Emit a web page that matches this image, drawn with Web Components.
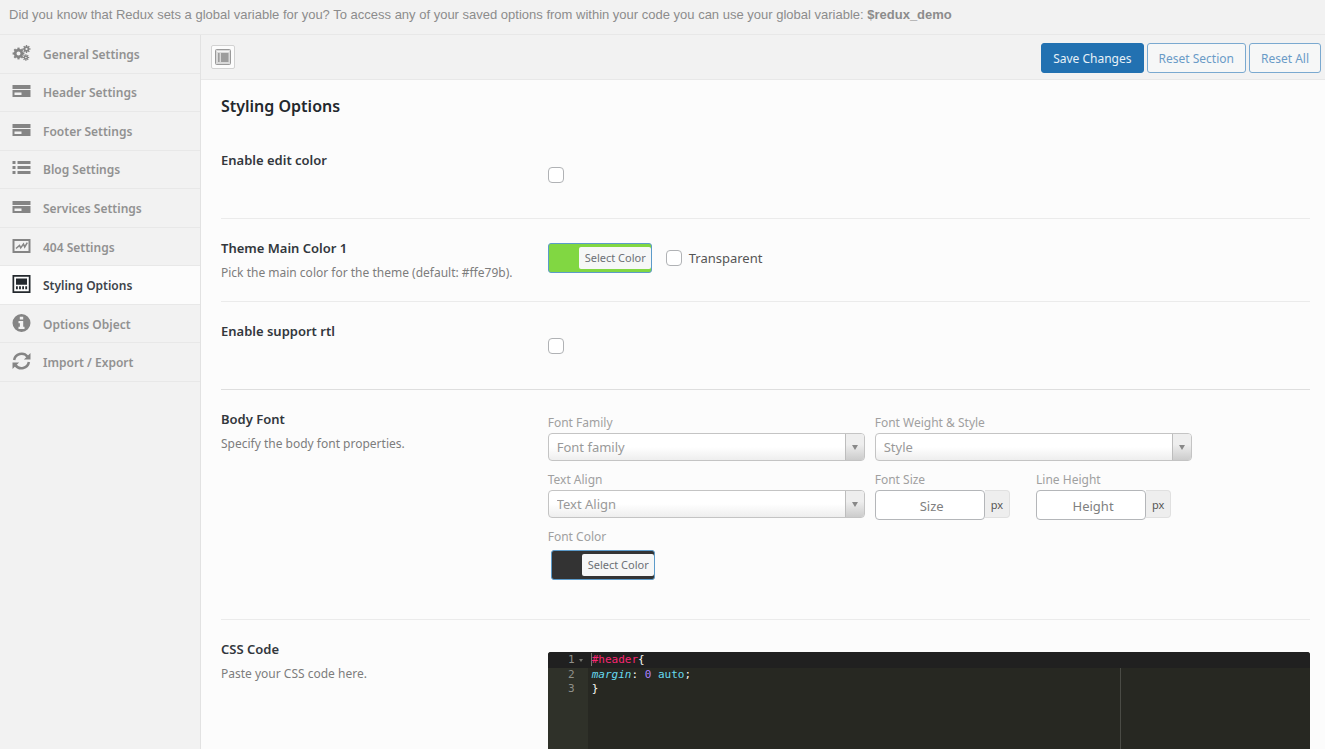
<!DOCTYPE html>
<html lang="en">
<head>
<meta charset="utf-8">
<meta name="viewport" content="width=device-width, initial-scale=1">
<title>Styling Options</title>
<style>
  body { margin: 0; font: 13px/20px "Noto Sans", "Open Sans", sans-serif; color: #3c434a; background: #fcfcfc; }
</style>
</head>
<body>
<redux-panel>
  <redux-hint slot="hint">Did you know that Redux sets a global variable for you? To access any of your saved options from within your code you can use your global variable: <strong>$redux_demo</strong></redux-hint>

  <redux-menu slot="menu">
    <redux-menu-item icon="cogs">General Settings</redux-menu-item>
    <redux-menu-item icon="card">Header Settings</redux-menu-item>
    <redux-menu-item icon="card">Footer Settings</redux-menu-item>
    <redux-menu-item icon="list">Blog Settings</redux-menu-item>
    <redux-menu-item icon="card">Services Settings</redux-menu-item>
    <redux-menu-item icon="chart">404 Settings</redux-menu-item>
    <redux-menu-item icon="site" active>Styling Options</redux-menu-item>
    <redux-menu-item icon="info">Options Object</redux-menu-item>
    <redux-menu-item icon="refresh">Import / Export</redux-menu-item>
  </redux-menu>

  <redux-toolbar slot="toolbar">
    <redux-button primary>Save Changes</redux-button>
    <redux-button>Reset Section</redux-button>
    <redux-button>Reset All</redux-button>
  </redux-toolbar>

  <redux-section heading="Styling Options">
    <redux-field heading="Enable edit color"><redux-check label="Enable edit color" solo></redux-check></redux-field>
    <redux-field heading="Theme Main Color 1" hint="Pick the main color for the theme (default: #ffe79b).">
      <redux-color color="#81d742"></redux-color>
      <redux-check label="Transparent"></redux-check>
    </redux-field>
    <redux-field heading="Enable support rtl" strong><redux-check label="Enable support rtl" solo></redux-check></redux-field>
    <redux-field heading="Body Font" hint="Specify the body font properties."><redux-typography></redux-typography></redux-field>
    <redux-field heading="CSS Code" hint="Paste your CSS code here." last><redux-editor></redux-editor></redux-field>
  </redux-section>
</redux-panel>

<script>
const define = (name, html, setup) => {
  const template = document.createElement('template');
  template.innerHTML = '<style>*{box-sizing:border-box}</style>' + html;
  customElements.define(name, class extends HTMLElement {
    connectedCallback() {
      if (this.shadowRoot) return;
      const root = this.attachShadow({ mode: 'open' });
      root.append(template.content.cloneNode(true));
      if (setup) setup(this, root);
    }
  });
};

const gear = (cx, cy, r, hole, teeth, w) => {
  let out = `<circle cx="${cx}" cy="${cy}" r="${(r + hole) / 2}" fill="none" stroke="currentColor" stroke-width="${r - hole}"/>`;
  for (let i = 0; i < teeth; i++) {
    out += `<rect x="${cx - w / 2}" y="${cy - r - 1.2}" width="${w}" height="2" transform="rotate(${i * 360 / teeth} ${cx} ${cy})"/>`;
  }
  return out;
};

const icons = {
  cogs: gear(6, 9.5, 4.7, 2, 8, 2.2) + gear(14, 5, 2.8, 1.1, 8, 1.4) + gear(13.4, 13.5, 2.1, 0.8, 8, 1.2),
  card: '<path fill-rule="evenodd" d="M0 3h18v4H0zM0 8h18v7H0zM2 10.6v2.4h7v-2.4z"/>',
  list: '<path d="M0 2h3v3H0zM5 2h13v3H5zM0 7h3v3H0zM5 7h13v3H5zM0 12h3v3H0zM5 12h13v3H5z"/>',
  chart: '<path fill-rule="evenodd" d="M0 2h18v14H0zM2 4v10h14V4z"/><path d="M3.5 11.5 7 8.5l1.2 2.4L11 7l1.2 3 2.6-4.4" fill="none" stroke="currentColor" stroke-width="1.5"/>',
  site: '<path fill-rule="evenodd" d="M0 0h18v18H0zM1.7 1.7v14.6h14.6V1.7z"/><path d="M3.5 3.5h11v6.3h-11zM3.5 11.3h1.8v3H3.5zM6.6 11.3h1.8v3H6.6zM9.7 11.3h1.8v3H9.7zM12.8 11.3h1.8v3h-1.8z"/>',
  info: '<path fill-rule="evenodd" d="M9 0a9 9 0 1 0 0 18A9 9 0 0 0 9 0zM7.3 2.8h3.4v2.7H7.3zM6 7h4.7v5.8H12V15H6v-2.2h1.4V9.2H6z"/>',
  refresh: '<path d="M1.6 8A7.6 7.6 0 0 1 15 4.6M16.4 10A7.6 7.6 0 0 1 3 13.4" fill="none" stroke="currentColor" stroke-width="2.5"/><path d="M18 1v6.6h-6.6zM0 17v-6.6h6.6z"/>'
};

define('redux-menu-item', `
  <style>
    :host { display: grid; }
    a { display: flex; align-items: center; gap: 12px; padding: 2px 12px 0; border-bottom: 1px solid #e8e8e8; color: #919191; font-size: 12px; font-weight: 600; text-decoration: none; }
    svg { width: 19px; height: 18px; flex: none; color: #858585; fill: currentColor; margin-bottom: 4px; }
    :host([active]) a { background: #fcfcfc; color: #3c434a; }
    :host([active]) svg { color: #23282d; }
  </style>
  <a href="#"><svg viewBox="0 0 18 18" aria-hidden="true"></svg><span><slot></slot></span></a>`,
  (el, root) => {
    root.querySelector('svg').innerHTML = icons[el.getAttribute('icon')];
    if (el.hasAttribute('active')) root.querySelector('a').setAttribute('aria-current', 'page');
  });

define('redux-menu', `
  <style>
    :host { display: block; }
    nav { display: grid; grid-auto-rows: 1fr; min-height: 347px; }
  </style>
  <nav aria-label="Sections"><slot></slot></nav>`);

define('redux-hint', `
  <style>
    :host { display: block; padding: 4px 9px 9px; border-bottom: 1px solid #e8e8e8; background: #f2f2f2; color: #8c8c8c; font: 13px/21px "Liberation Sans", Arial, sans-serif; }
  </style>
  <slot></slot>`);

define('redux-button', `
  <style>
    :host { display: block; }
    button { min-height: 30px; padding: 2px 11px 0; border: 1px solid #7aa9d0; border-radius: 3px; background: #f6f7f7; color: #6a9bc7; font: inherit; font-size: 12px; }
    :host([primary]) button { background: #2271b1; border-color: #2271b1; color: #e8f1f8; }
  </style>
  <button type="button"><slot></slot></button>`);

define('redux-toolbar', `
  <style>
    :host { display: flex; align-items: center; justify-content: space-between; padding: 8px 4px 6px 10px; background: #f2f2f2; border-bottom: 1px solid #e8e8e8; }
    .expand { width: 24px; height: 24px; padding: 2px; border: 1px solid #d2d2d2; border-radius: 2px; background: #fcfcfc; margin-bottom: 2px; }
    .expand svg { display: block; width: 18px; height: 18px; }
    .actions { display: flex; gap: 3px; }
  </style>
  <button class="expand" type="button" aria-label="Expand options">
    <svg viewBox="0 0 18 18"><rect x="1.5" y="1.5" width="15" height="15" rx="1" fill="#d9d9d9" stroke="#9a9a9a"/><path d="M4 5h1.6v9H4zM7 5h7.5v9H7z" fill="#9d9d9d"/><path d="M3 3.5h12" stroke="#f4f4f4"/></svg>
  </button>
  <div class="actions"><slot></slot></div>`);

define('redux-section', `
  <style>
    :host { display: flex; flex-direction: column; flex: 1; padding: 15px 15px 0 20px; }
    h2 { margin: 0; padding-bottom: 14px; font-size: 16px; line-height: 22px; font-weight: 600; color: #23282d; }
  </style>
  <h2></h2><slot></slot>`,
  (el, root) => { root.querySelector('h2').textContent = el.getAttribute('heading'); });

define('redux-field', `
  <style>
    :host { display: grid; grid-template-columns: 3fr 7fr; border-bottom: 1px solid #ebebeb; }
    :host([strong]) { border-bottom-color: #dedede; }
    :host([last]) { flex: 1; border-bottom: 0; }
    .title { padding: 19px 20px 18px 0; }
    h3 { margin: 0; font-size: 13px; line-height: 20px; font-weight: 600; color: #32373c; }
    p { margin: 5px 0 0; font-size: 12px; line-height: 20px; color: #7d7d7d; }
    .control { display: flex; align-items: flex-start; gap: 14px; padding: 24px 0 18px; min-width: 0; }
    :host([last]) .control { align-items: stretch; padding-bottom: 0; }
  </style>
  <div class="title"><h3></h3><p></p></div>
  <div class="control"><slot></slot></div>`,
  (el, root) => {
    root.querySelector('h3').textContent = el.getAttribute('heading');
    const hint = root.querySelector('p');
    if (el.hasAttribute('hint')) hint.textContent = el.getAttribute('hint');
    else hint.remove();
  });

define('redux-check', `
  <style>
    :host { display: block; padding: 5px 0; }
    :host([solo]) { padding: 12px 0 17px; }
    label { display: flex; align-items: center; gap: 7px; }
    input { appearance: none; width: 16px; height: 16px; margin: 0; border: 1px solid #b0b2b5; border-radius: 4px; background: #fff; }
    input:checked { background: #2271b1; }
    span { color: #555; }
    :host([solo]) label { min-height: 16px; width: 16px; }
  </style>
  <label><input type="checkbox"><span></span></label>`,
  (el, root) => {
    const label = el.getAttribute('label');
    if (el.hasAttribute('solo')) {
      root.querySelector('span').remove();
      root.querySelector('input').setAttribute('aria-label', label);
    } else root.querySelector('span').textContent = label;
  });

define('redux-color', `
  <style>
    :host { display: block; }
    button { display: flex; align-items: center; min-height: 30px; padding: 0 0 0 30px; border: 1px solid #5c9bca; border-radius: 3px; font: inherit; }
    span { padding: 0 5px 0 6px; border-radius: 2px; background: #f6f7f7; color: #6c7075; font-size: 11px; line-height: 22px; }
  </style>
  <button type="button"><span>Select Color</span></button>`,
  (el, root) => { root.querySelector('button').style.backgroundColor = el.getAttribute('color'); });

define('redux-select', `
  <style>
    :host { display: block; }
    label { display: block; font-size: 12px; line-height: 18px; color: #a0a0a0; }
    .box { position: relative; display: grid; margin-top: 1px; }
    select { appearance: none; width: 100%; height: 28px; padding: 0 28px 0 8px; border: 1px solid #c4c4c4; border-radius: 4px; background: linear-gradient(#fff 50%, #eee); color: #999; font: inherit; }
    .arrow { position: absolute; top: 1px; right: 1px; bottom: 1px; width: 19px; border-left: 1px solid #bdbdbd; border-radius: 0 3px 3px 0; background: linear-gradient(#eee 40%, #ccc); display: grid; place-items: center; pointer-events: none; }
    .arrow::after { content: ""; border: 3px solid transparent; border-top: 5px solid #888; border-bottom: 0; }
  </style>
  <label for="s"></label>
  <div class="box"><select id="s"><option></option></select><span class="arrow"></span></div>`,
  (el, root) => {
    root.querySelector('label').textContent = el.getAttribute('label');
    root.querySelector('option').textContent = el.getAttribute('placeholder');
  });

define('redux-unit', `
  <style>
    :host { display: block; }
    label { display: block; font-size: 12px; line-height: 18px; color: #a0a0a0; }
    .box { display: flex; align-items: flex-start; margin-top: 1px; }
    input { width: 110px; height: 30px; padding: 2px 8px 0 12px; border: 1px solid #b4b6b9; border-radius: 4px; background: #fff; font: inherit; text-align: center; }
    input::placeholder { color: #808080; opacity: 1; }
    .unit { height: 28px; padding: 1px 6px 0; border: 1px solid #e0e0e0; border-left: 0; border-radius: 0 4px 4px 0; background: #eee; color: #555; font-size: 11px; line-height: 26px; }
  </style>
  <label for="n"></label>
  <div class="box"><input id="n" type="text"><span class="unit">px</span></div>`,
  (el, root) => {
    root.querySelector('label').textContent = el.getAttribute('label');
    root.querySelector('input').placeholder = el.getAttribute('placeholder');
  });

define('redux-typography', `
  <style>
    :host { display: block; flex: 1; padding-bottom: 17px; }
    .grid { display: grid; grid-template-columns: repeat(2, minmax(0, 317px)); gap: 10px; }
    .units { display: flex; gap: 26px; margin-bottom: -3px; }
    .label { font-size: 12px; line-height: 18px; color: #a0a0a0; }
    redux-color { margin: 4px 3px; width: max-content; }
  </style>
  <div class="grid">
    <redux-select label="Font Family" placeholder="Font family"></redux-select>
    <redux-select label="Font Weight &amp; Style" placeholder="Style"></redux-select>
    <redux-select label="Text Align" placeholder="Text Align"></redux-select>
    <div class="units">
      <redux-unit label="Font Size" placeholder="Size"></redux-unit>
      <redux-unit label="Line Height" placeholder="Height"></redux-unit>
    </div>
    <div><div class="label">Font Color</div><redux-color color="#333333"></redux-color></div>
  </div>`);

define('redux-editor', `
  <style>
    :host { display: flex; flex: 1; margin-top: 8px; min-height: 95px; border-radius: 3px 3px 0 0; overflow: hidden; background: linear-gradient(90deg, #2f3129 40px, #272822 40px); font: 11px/14px "DejaVu Sans Mono", "Liberation Mono", monospace; color: #f8f8f2; }
    .code { flex: 1; display: flex; flex-direction: column; min-width: 0; background: linear-gradient(#4a4b45, #4a4b45) 572px 0 / 1px 100% no-repeat; }
    .line { display: grid; grid-template-columns: 27px 17px 1fr; }
    .line:first-child { padding: 1px 0; background: #202020; }
    .num { text-align: right; color: #8f908a; }
    .fold { display: grid; place-items: center; padding-right: 4px; }
    .fold.on::after { content: ""; border: 2px solid transparent; border-top: 3px solid #75766f; border-bottom: 0; }
    pre { margin: 0; font: inherit; }
    .tag { color: #f92672; border-left: 1px solid #77786f; margin-left: -1px; }
    .prop { color: #66d9ef; font-style: italic; }
    .val { color: #66d9ef; }
    .zero { color: #ae81ff; }
  </style>
  <div class="code" role="group" aria-label="CSS Code">
    <div class="line"><span class="num">1</span><span class="fold on"></span><pre><span class="tag">#header</span>{</pre></div>
    <div class="line"><span class="num">2</span><span class="fold"></span><pre><span class="prop">margin</span>: <span class="zero">0</span> <span class="val">auto</span>;</pre></div>
    <div class="line"><span class="num">3</span><span class="fold"></span><pre>}</pre></div>
  </div>`);

define('redux-panel', `
  <style>
    :host { display: flex; flex-direction: column; min-height: 100vh; }
    .body { flex: 1; display: grid; grid-template-columns: 201px minmax(0, 1fr); }
    aside { background: #f2f2f2; border-right: 1px solid #e2e2e2; }
    main { display: flex; flex-direction: column; min-width: 0; background: #fcfcfc; }
  </style>
  <slot name="hint"></slot>
  <div class="body">
    <aside><slot name="menu"></slot></aside>
    <main><slot name="toolbar"></slot><slot></slot></main>
  </div>`);
</script>
</body>
</html>
